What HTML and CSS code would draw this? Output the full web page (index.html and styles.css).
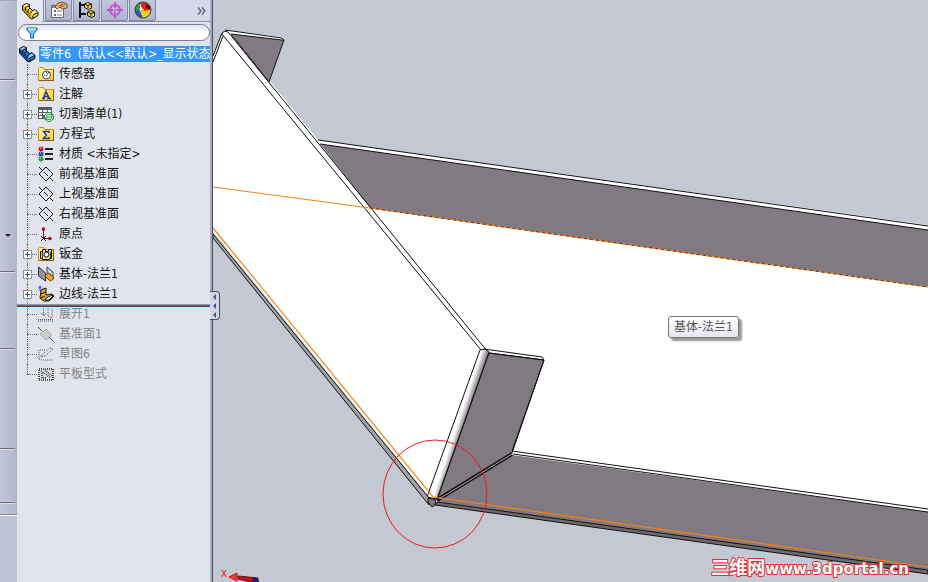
FILE: index.html
```
<!DOCTYPE html>
<html lang="zh-CN">
<head>
<meta charset="utf-8">
<title>零件6</title>
<link rel="stylesheet" href="styles.css">
</head>
<body>
<svg class="defs" aria-hidden="true">
  <defs>
    <linearGradient id="gold" x1="0" y1="0" x2="1" y2="1"><stop offset="0" stop-color="#fffbb0"/><stop offset="1" stop-color="#ffce2c"/></linearGradient>
    <symbol id="part" viewBox="0 0 18 18">
      <path d="M1.500 3.500l4-2 3 1v3l3 3 2.500-1 3 3v3l-5 3-2 .5-8.500-9z" stroke="#111" stroke-linejoin="round"/>
      <path d="M2 4l8 8v4L2 8z" fill="#000" fill-opacity=".3"/>
      <path d="M2 4l3.500-2 2.500 1-3.500 2zM10 11l4-2.500 2 2-4 2.500z" fill="#fff" fill-opacity=".6"/>
      <path d="M4.500 5.500l4-2M4.500 5.500v3M7 8l2-2M7 8v3M9.500 11.500l2-3M12 13.500v3M12 13l4.500-2.500" fill="none" stroke="#111"/>
    </symbol>
    <symbol id="folder" viewBox="0 0 16 16">
      <path d="M.5 14.500v-12l1-1h4l1 2h9v11z" fill="url(#gold)" stroke="#d08a10"/>
      <path d="M1 14.500h14.500v-11" fill="none" stroke="#8a5a08"/>
    </symbol>
    <symbol id="plane" viewBox="0 0 16 16">
      <path d="M8 1l7 7-7 7-7-7z" fill="none" stroke="#111"/>
      <path d="M1 1l4 4M11 11l4 4M6 6l4 4" fill="none" stroke="#111"/>
    </symbol>
  </defs>
</svg>
<div class="app">
  <div class="rail"><i class="seg first"></i><i class="seg drop"><b></b></i><i class="seg mid"></i><i class="seg low"></i><i class="seg last"></i><i class="rest"></i></div>
  <aside class="panel">
    <nav class="tabs">
      <button class="tab active" aria-label="FeatureManager"><svg class="i18" fill="#ffd21c"><use href="#part"/></svg></button>
      <button class="tab" aria-label="PropertyManager"><svg class="i18" viewBox="0 0 18 18"><path d="M1.500 4.500h12v12h-12z" fill="#fff" stroke="#667"/><path d="M2 5h11v2H2z" fill="#7786a8"/><path d="M4 9h2v2H4zM4 13h2v2H4z" fill="#46b"/><path d="M7 10h5M7 14h5" stroke="#778"/><path d="M5 6l3-4 4-1 5 2v4l-5 1-2-2-3 2z" fill="#edb27d" stroke="#7b4725"/><path d="M9 5l4-2M11 6l4-2" stroke="#7b4725"/></svg></button>
      <button class="tab" aria-label="ConfigurationManager"><svg class="i18" viewBox="0 0 18 18"><path d="M2 1v16M2 4h4M2 13h6" stroke="#111" stroke-width="2" fill="none"/><path d="M6.500 3l3-1.500 4 1.500v4l-3 1.500-4-2zM9.500 11l3-1.500 4 1.500v4l-3 1.500-4-2z" fill="#ffdc24" stroke="#111"/><path d="M7 3.500l3 1v3M10 11.500l3 1v3M10 4.500l3-1M13 12.500l3-1" fill="none" stroke="#111"/></svg></button>
      <button class="tab" aria-label="DimXpertManager"><svg class="i18" viewBox="0 0 18 18"><g fill="none" stroke="#cb4fd2" stroke-width="2"><circle cx="9" cy="9" r="5"/><path d="M9 1v6M9 11v6M1 9h6M11 9h6"/></g><circle cx="9" cy="9" r="1" fill="#c43cc9"/></svg></button>
      <button class="tab" aria-label="DisplayManager"><svg class="i18" viewBox="0 0 18 18"><circle cx="9" cy="9" r="8" fill="#e42118"/><path d="M1 9a8 8 0 0 1 6-7.700Q5 5 6 10z" fill="#2c9e39"/><path d="M1 9l6 1 2 7A8 8 0 0 1 1 9z" fill="#2459ce"/><path d="M6 10l11-1a8 8 0 0 1-8 8z" fill="#f5cf19"/><path d="M6 10Q5 5 8 1q-3 4 2 8z" fill="#fff"/><path d="M12 3q4 1 4 5l-4-1z" fill="#27191b"/><circle cx="9" cy="9" r="8" fill="none" stroke="#444"/></svg></button>
      <button class="more" aria-label="展开"><svg viewBox="0 0 9 8"><path d="M1 .5L4 4 1 7.500M5 .5L8 4 5 7.500" fill="none" stroke="#556" stroke-width="1.200"/></svg></button>
    </nav>
    <label class="filter"><svg viewBox="0 0 12 12"><path d="M1 1h10v2L7.500 7v4h-3V7L1 3z" fill="#79cbf5" stroke="#0860b4"/><path d="M2 2h8" stroke="#fff"/></svg><input type="text" aria-label="过滤器"></label>
    <div class="root"><svg class="i18" fill="#1d72d2"><use href="#part"/></svg><span>零件6&nbsp; (默认&lt;&lt;默认&gt;_显示状态</span></div>
    <ul class="tree">
      <li><svg class="ico"><use href="#folder"/><circle cx="8.500" cy="9" r="4" fill="#fff" stroke="#346"/><path d="M8 10l3-4M6 9h1M8.500 6v1" stroke="#346"/></svg>传感器</li>
      <li><button class="plus" aria-label="展开"></button><svg class="ico"><use href="#folder"/><path d="M4 12.500h3M9 12.500h4M5.500 12L8 5.500l3 6.500M6.500 10.500h4" fill="none" stroke="#153f9e" stroke-width="1.500"/></svg>注解</li>
      <li><button class="plus" aria-label="展开"></button><svg class="ico" viewBox="0 0 16 16"><path d="M0 1h14v12H0z" fill="#555b67"/><path d="M1 4h3v2H1zM5 4h4v2H5zM10 4h3v2h-3zM1 7h3v2H1zM5 7h4v2H5zM1 10h3v2H1z" fill="#fff"/><circle cx="11" cy="11" r="4.500" fill="#f3fff0" stroke="#149232"/><path d="M8 10q2-3 5-1l1-1v3h-3M14 12q-2 3-5 1l-1 1v-3h3" fill="none" stroke="#149232"/></svg>切割清单(1)</li>
      <li><button class="plus" aria-label="展开"></button><svg class="ico"><use href="#folder"/><path d="M11 7V5.500H5.500L8.500 9l-3 3.500H11V11" fill="none" stroke="#153f9e" stroke-width="1.500"/></svg>方程式</li>
      <li><svg class="ico" viewBox="0 0 16 16"><path d="M7 3h8M7 8h8M7 13h8" stroke="#222" stroke-width="2"/><circle cx="3" cy="3" r="2.500" fill="#d8181b"/><circle cx="3" cy="8" r="2.500" fill="#2447be"/><circle cx="3" cy="13" r="2.500" fill="#14a82e"/><path d="M2 2h1M2 7h1M2 12h1" stroke="#fff"/></svg>材质 &lt;未指定&gt;</li>
      <li><svg class="ico"><use href="#plane"/></svg>前视基准面</li>
      <li><svg class="ico"><use href="#plane"/></svg>上视基准面</li>
      <li><svg class="ico"><use href="#plane"/></svg>右视基准面</li>
      <li><svg class="ico" viewBox="0 0 16 16"><path d="M5.500 12V2M4 4l1.500-3L7 4zM6 12.500h8M11 11l3 1.500-3 1.500z" fill="#a10b16" stroke="#a10b16"/><path d="M3 10l5 5M8 10l-5 5" stroke="#111"/></svg>原点</li>
      <li><button class="plus" aria-label="展开"></button><svg class="ico"><use href="#folder"/><path d="M2.500 5.500h2v-2h3v2h3v-2h3v9h-2v1h-7v-1h-2z" fill="#e1d9a2" stroke="#111"/><circle cx="8.500" cy="8.500" r="2.500" fill="#fff" stroke="#111"/><path d="M4.500 6v6M12.500 6v6" stroke="#333"/></svg>钣金</li>
      <li><button class="plus" aria-label="展开"></button><svg class="ico" viewBox="0 0 16 16"><path d="M.5 1v9l7 5V7z" fill="#8d96a2" stroke="#333"/><path d="M9 1v6l6 4V6z" fill="#c8d5e7" stroke="#345"/><path d="M7.500 9l3-2 5 4v2l-3 2-5-4z" fill="#f7a420" stroke="#6a3900"/></svg>基体-法兰1</li>
      <li><button class="plus" aria-label="展开"></button><svg class="ico" viewBox="0 0 16 16"><path d="M3 4l5-2v7l6-1 2 2-5 5H6l-4-3z" fill="#f7a420" stroke="#111"/><path d="M8 12l6-3 1 1-4 4H7z" fill="#fff" stroke="#111"/><path d="M3 8l5-2M3 12l4-2" stroke="#111"/><path d="M2 5V0M0 2.500L2 .5l2 2" fill="none" stroke="#1836ce"/></svg>边线-法兰1</li>
      <li class="off bar"><svg class="ico" viewBox="0 0 16 16"><path d="M0 13.500h16M0 15h16M5.500 2v7M3 7l3 3 2-3M10 2v8l4 2V2" fill="none" stroke="#555" stroke-dasharray="1 1"/></svg>展开1</li>
      <li class="off"><svg class="ico" viewBox="0 0 16 16"><path d="M2 8l6-5 6 6-6 5z" fill="#ccc" stroke="#888" stroke-dasharray="1 1"/><path d="M0 1l4 4M11 11l4 4" stroke="#444"/></svg>基准面1</li>
      <li class="off"><svg class="ico" viewBox="0 0 16 16"><path d="M1 13V4h6M1 13l3 1h11M3 10l9-8 3 1-8 7-4 1z" fill="none" stroke="#555" stroke-dasharray="1 1"/></svg>草图6</li>
      <li class="off"><svg class="ico" viewBox="0 0 16 16"><path d="M1 3h14v11H1zM3 5l10 7M7 4l7 6M4 7v5h5" fill="none" stroke="#555" stroke-width="2" stroke-dasharray="1 1"/></svg>平板型式</li>
    </ul>
    <button class="handle" aria-label="折叠"><i></i><i></i><i></i></button>
  </aside>
  <main class="view">
    <svg class="model" viewBox="213 0 715 582" preserveAspectRatio="xMinYMin slice">
      <defs><linearGradient id="bend" gradientUnits="userSpaceOnUse" x1="452" y1="422" x2="464" y2="426"><stop offset="0" stop-color="#fff"/><stop offset=".45" stop-color="#fff"/><stop offset=".8" stop-color="#aaa7aa"/><stop offset="1" stop-color="#827a82"/></linearGradient></defs>
      <path d="M213 57L223 32l5-2 90 110 610 85v346L434 503 213 232z" fill="#fff"/>
      <g stroke="#111" stroke-linejoin="round" fill="none">
        <path d="M225 30l57 7 2 3-15 42z" fill="#fff" stroke="none"/>
        <path d="M231 34l51 6 2 0-15 42z" fill="#827a82"/>
        <path d="M320 144l608 86v57L370 208z" fill="#827a82" stroke="none"/>
        <path d="M225 30l57 8 2 2M318 140l610 86M320 144l608 86M213 56l9-23 3-2 3 1 259 319M213 62l10-26M222 34l259 316"/>
        <path d="M489 353l55 7-32 93-75 47z" fill="#827a82"/>
        <path d="M512 455l416 57v60L437 502z" fill="#827a82" stroke="none"/>
        <path d="M480 350l5-1 4 3-52 147-10-2z" fill="url(#bend)"/>
        <path d="M484 349l58 8 2 3-55-7M544 360l-32 91 416 58M513 454l415 58"/>
        <path d="M437 500l75-46" stroke-width="4"/><path d="M439 499l73-45" stroke="#b6b1b6"/>
        <path d="M437 502l491 68v4L435 505z" fill="#6f6870"/>
        <path d="M213 234l216 264v7L213 238z" fill="#a5a2a6"/>
        <path d="M428 498l8 2-1 5-3 2-4-5z" fill="#827a82"/>
      </g>
      <path d="M213 187l157 21 558 79M213 228l220 269 495 70" fill="none" stroke="#f58213" stroke-width="1.200"/>
      <path d="M370 208l558 79" stroke="#5d3513" stroke-dasharray="3 3"/>
      <ellipse cx="435" cy="494" rx="52" ry="54" fill="none" stroke="#f01820"/>
      <path d="M238 576l20 2v4h-8l-12-3z" fill="#c01515" stroke="#611"/><path d="M252 578h5l3 5h-7z" fill="#1a1a85"/><path d="M229 577l8-4v8z" fill="#f33" stroke="#922"/>
    </svg>
    <span class="axis">X</span>
    <div class="tip" role="tooltip">基体-法兰1</div>
    <div class="mark">三维网<span>www.3dportal.cn</span></div>
  </main>
</div>
</body>
</html>
```
FILE: styles.css
```
* { box-sizing: border-box; }
body { margin: 0; font: 12px/20px "DejaVu Sans Condensed", "Noto Sans CJK SC", sans-serif; color: #111; background: #c4c8d3; }
button { padding: 0; border: 0; background: none; font: inherit; }
.defs { position: absolute; width: 0; height: 0; }
.app { display: flex; min-height: 100vh; }

.rail { display: flex; flex-direction: column; flex: 0 0 17px; background: linear-gradient(90deg, #c3c8da, #b0b5cd); }
.seg { flex: none; margin-right: 2px; border-bottom: 1px solid #6b6d79; box-shadow: 0 1px #dce0ea; }
.first { height: 80px; border-top: 1px dotted #8f94a8; }
.drop { display: grid; place-items: end center; height: 192px; padding-bottom: 34px; }
.drop b { border: 3px solid transparent; border-top-color: #223; border-bottom: 0; }
.mid { height: 77px; }
.low { height: 100px; }
.last { height: 54px; }
.rest { flex: 1; margin-top: 11px; border-top: 1px solid #888; background: #bec3d8; box-shadow: inset 0 1px #fff; }

.panel { position: relative; flex: 0 0 196px; min-width: 0; display: flex; flex-direction: column; border-right: 1px solid #4c4e5f; background: #e1e4ec; box-shadow: inset -2px 0 #a8acc2; }
.tabs { display: flex; height: 22px; margin-right: 2px; border-bottom: 1px solid #888da5; background: #d5d9eb; }
.tab { display: grid; place-items: center; width: 27px; margin-right: 1px; border: 1px solid #858aa2; border-top: 0; border-radius: 0 0 3px; background: linear-gradient(#c2c7dc, #aeb4ce); }
.tab.active { height: 22px; border-width: 0 1px 0 0; background: #e5e8f0; }
.i18 { width: 18px; height: 18px; flex: none; }
.more { margin: 0 4px 0 auto; }
.more svg { display: block; width: 9px; height: 8px; }
.filter { display: flex; align-items: center; height: 17px; margin: 2px 2px 3px 1px; padding-left: 7px; border: 1px solid #777c90; border-radius: 9px; background: linear-gradient(#dce0ea, #fff 50%); }
.filter svg { width: 12px; height: 12px; }
.filter input { flex: 1; min-width: 0; height: 13px; border: 0; outline: 0; background: none; }
.root { display: flex; align-items: center; height: 20px; padding: 0 2px 0 1px; gap: 3px; }
.root span { flex: 1; min-width: 0; height: 16px; padding-left: 1px; line-height: 16px; white-space: nowrap; overflow: hidden; background: #3397fb; color: #fff; }
.tree { margin: 0; padding: 0; list-style: none; }
.tree li { position: relative; display: flex; align-items: center; height: 20px; gap: 5px; margin-left: 10px; padding-left: 11px; white-space: pre; }
.tree li::before { content: ""; position: absolute; left: 0; top: 0; height: 20px; border-left: 1px dotted #666; }
.tree li:last-child::before { height: 10px; }
.tree li::after { content: ""; position: absolute; left: 0; top: 10px; width: 10px; border-top: 1px dotted #666; }
.ico { width: 16px; height: 16px; flex: none; }
.plus { position: absolute; left: -4px; top: 6px; z-index: 1; width: 9px; height: 9px; border: 1px solid #8f9390; background: linear-gradient(#2450a0, #2450a0) center / 5px 1px no-repeat, linear-gradient(#2450a0, #2450a0) center / 1px 5px no-repeat, #fff; }
.tree .off { color: #858585; }
.tree .bar { margin-left: 0; margin-right: 2px; padding-left: 21px; background: linear-gradient(#8d98a8 0 1px, #1c7ce6 1px 2px, #424954 2px 3px, transparent 3px); }
.tree .bar::before { top: 3px; height: 17px; margin-left: 10px; }
.tree .bar::after { margin-left: 10px; }
.handle { position: absolute; right: -8px; top: 291px; display: grid; place-items: center; width: 10px; height: 29px; border: 1px solid #4c4e5f; border-left: 0; border-radius: 0 4px 4px 0; background: #d1d5e4; z-index: 1; }
.handle i { border: 3px solid transparent; border-left: 0; border-right-color: #505086; }

.view { position: relative; flex: 1; min-width: 0; overflow: hidden; }
.model { position: absolute; inset: 0; width: 100%; height: 100%; }
.axis { position: absolute; left: 8px; bottom: -3px; font: 10px/20px "Liberation Mono", monospace; color: #f00; }
.tip { position: absolute; left: 455px; top: 316px; height: 22px; padding: 0 5px; border: 1px solid #777; border-radius: 3px; background: linear-gradient(#fff, #e5e6f2); box-shadow: 3px 3px 2px #999; color: #555; }
.mark { position: absolute; right: 19px; bottom: 3px; color: #fff; font: bold 18px/20px "Noto Sans CJK SC", sans-serif; -webkit-text-stroke: 2px #e82c2c; paint-order: stroke fill; white-space: nowrap; }
.mark span { font: bold 15px/20px "DejaVu Sans", sans-serif; }
```
